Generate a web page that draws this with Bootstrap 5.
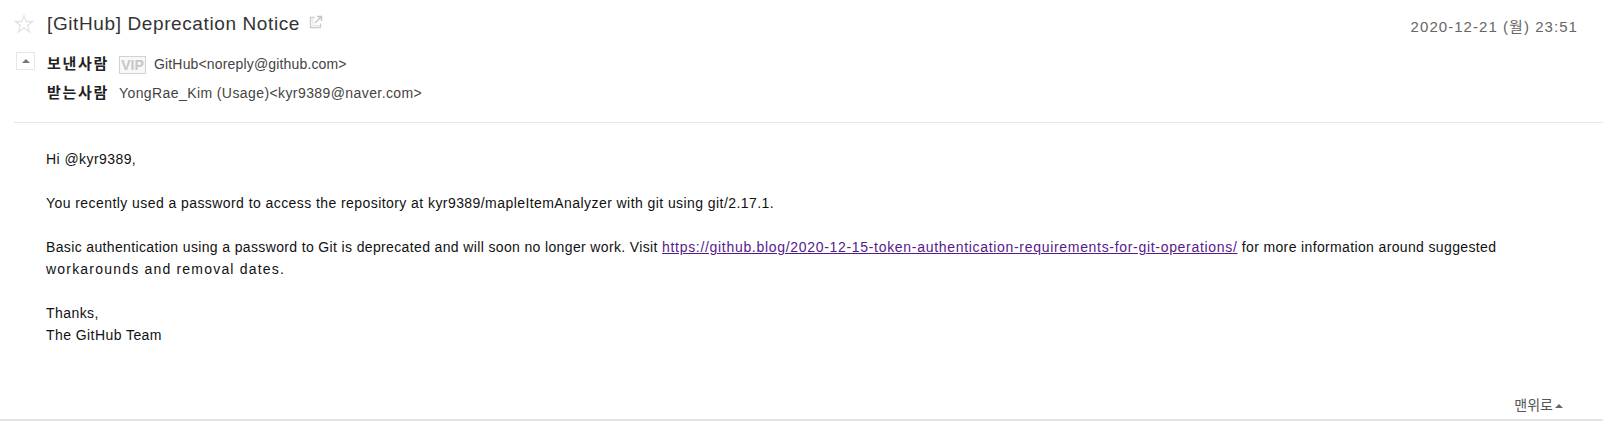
<!DOCTYPE html>
<html lang="ko">

<head>
    <meta charset="UTF-8">
    <meta name="viewport" content="width=device-width, initial-scale=1.0">
    <title>[GitHub] Deprecation Notice</title>
    <link href="https://cdn.jsdelivr.net/npm/bootstrap@5.3.0/dist/css/bootstrap.min.css" rel="stylesheet">
    <style>
        body {
            font-family: "Liberation Sans", "Noto Sans CJK KR", sans-serif;
            font-size: 14px;
            color: #111;
            background: #fff;
            height: 421px;
            overflow: hidden;
        }

        .mail-head {
            margin-left: 14px;
            height: 123px;
            padding-top: 9px;
            border-bottom: 1px solid #e8e8e8;
        }

        .mail-title-row {
            height: 30px;
            padding-right: 25px;
        }

        .mail-title {
            font-size: 19px;
            line-height: 20px;
            color: #333;
            letter-spacing: 0.61px;
            margin: 0 9px 0 13px;
            font-weight: 400;
        }

        .popout-icon {
            margin-bottom: 4px;
        }

        .mail-date {
            font-size: 15px;
            color: #666;
            letter-spacing: 1.05px;
            margin-top: 7px;
        }

        .addr-row {
            height: 29px;
            padding-left: 33px;
            position: relative;
        }

        .addr-first {
            margin-top: 11px;
        }

        .addr-label {
            font-weight: 700;
            font-size: 15px;
            color: #222;
            width: 72px;
            letter-spacing: 1.7px;
            flex: none;
        }

        .addr-text {
            color: #444;
            letter-spacing: 0.16px;
        }

        .addr-text-wide {
            letter-spacing: 0.41px;
        }

        .fold-btn {
            position: absolute;
            left: 2px;
            top: 2px;
            width: 19px;
            height: 18px;
            border: 1px solid #e6e6e6;
            background: #fff;
            padding: 0;
        }

        .fold-btn .up-tri {
            border-bottom-color: #777;
            margin: 0;
        }

        .vip-tag {
            width: 27px;
            height: 18px;
            border: 1px solid #d2d2d2;
            color: #c6c6c6;
            background: #f8f8f8;
            font-size: 14px;
            font-weight: 700;
            line-height: 16px;
            text-align: center;
            margin-right: 8px;
            flex: none;
        }

        .mail-body {
            padding: 25px 90px 0 46px;
            line-height: 22px;
            letter-spacing: 0.43px;
        }

        .mail-body p {
            margin: 0 0 22px;
        }

        .mail-body a {
            color: #551a8b;
            letter-spacing: 0.69px;
        }

        .body-tight {
            letter-spacing: 0.36px;
        }

        .body-loose {
            letter-spacing: 1.2px;
        }

        .top-link-row {
            height: 47px;
            padding: 21px 40px 0 0;
            border-bottom: 2px solid #e4e4e4;
            margin-top: 28px;
        }

        .top-link {
            color: #555;
            text-decoration: none;
            font-size: 14px;
        }

        .up-tri {
            width: 0;
            height: 0;
            border-left: 4px solid transparent;
            border-right: 4px solid transparent;
            border-bottom: 4px solid #666;
            margin-left: 2px;
        }
    </style>
</head>

<body>
    <div class="mail-head">
        <div class="mail-title-row d-flex justify-content-between">
            <div class="d-flex align-items-center">
                <svg width="20" height="20" viewBox="0 0 20 20">
                    <path d="M10 1.500l2.300 6h6.200l-5 3.900 1.900 6.400L10 14l-5.400 3.800 1.900-6.400-5-3.900h6.200z" fill="#fff" stroke="#e4e4e4" stroke-width="1.300"/>
                </svg>
                <h1 class="mail-title">[GitHub] Deprecation Notice</h1>
                <svg class="popout-icon" width="14" height="14" viewBox="0 0 14 14">
                    <path d="M5.500 2.500H1.500v10h10V8.500" fill="none" stroke="#ccc" stroke-width="1.400"/>
                    <path d="M4 3.500v7h7" fill="none" stroke="#e2e2e2" stroke-width="1"/>
                    <path d="M6 8l6-6M8 1.500h4.500V6" fill="none" stroke="#c4c4c4" stroke-width="1.400"/>
                </svg>
            </div>
            <div class="mail-date">2020-12-21 (월) 23:51</div>
        </div>

        <div class="addr-row addr-first d-flex align-items-center">
            <button type="button" class="fold-btn d-flex align-items-center justify-content-center" aria-label="접기">
                <span class="up-tri"></span>
            </button>
            <span class="addr-label">보낸사람</span>
            <span class="vip-tag">VIP</span>
            <span class="addr-text">GitHub&lt;noreply@github.com&gt;</span>
        </div>
        <div class="addr-row d-flex align-items-center">
            <span class="addr-label">받는사람</span>
            <span class="addr-text addr-text-wide">YongRae_Kim (Usage)&lt;kyr9389@naver.com&gt;</span>
        </div>
    </div>

    <div class="mail-body">
        <p>Hi @kyr9389,</p>
        <p>You recently used a password to access the repository at kyr9389/mapleItemAnalyzer with git using git/2.17.1.</p>
        <p class="body-tight">Basic authentication using a password to Git is deprecated and will soon no longer work. Visit <a href="#">https://github.blog/2020-12-15-token-authentication-requirements-for-git-operations/</a> for more information around suggested <span class="body-loose">workarounds and removal dates.</span></p>
        <p class="mb-0">Thanks,<br>The GitHub Team</p>
    </div>

    <div class="top-link-row d-flex justify-content-end align-items-start">
        <a href="#" class="top-link d-flex align-items-center">맨위로<span class="up-tri"></span></a>
    </div>
</body>

</html>
